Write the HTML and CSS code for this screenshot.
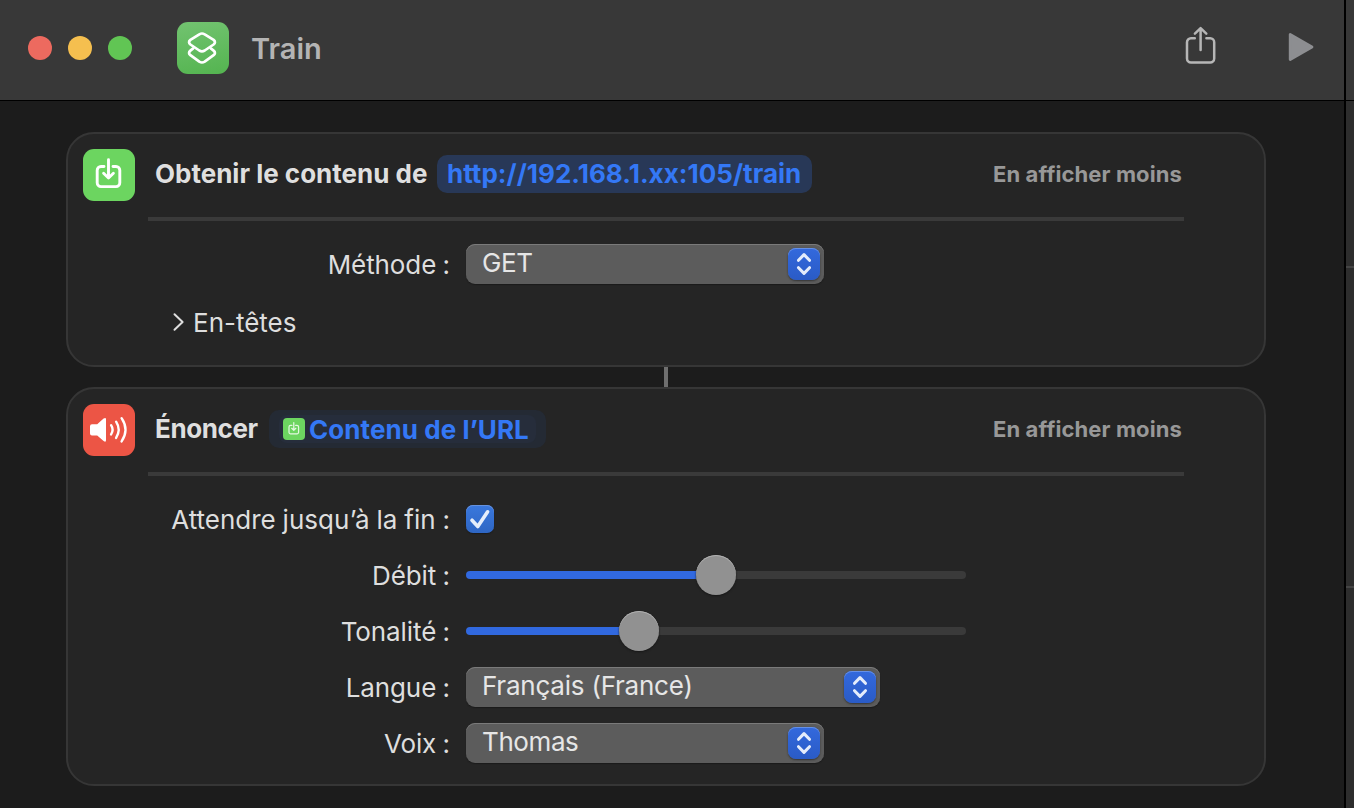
FILE: index.html
```html
<!DOCTYPE html>
<html lang="fr">
<head>
<meta charset="utf-8">
<title>Train</title>
<link rel="stylesheet" href="styles.css">
</head>
<body>
<svg class="defs" width="0" height="0" aria-hidden="true">
  <symbol id="download" viewBox="0 0 52 52">
    <path d="M21 17.500H18a3.800 3.800 0 0 0-3.800 3.800v12.500a3.800 3.800 0 0 0 3.800 3.800h15a3.800 3.800 0 0 0 3.800-3.800V21.300a3.800 3.800 0 0 0-3.800-3.800h-3M25.500 10.800V28.800M20.600 24.300l4.900 4.700 4.900-4.700" fill="none" stroke="currentColor" stroke-width="2.900" stroke-linecap="round" stroke-linejoin="round"/>
  </symbol>
  <symbol id="updown" viewBox="0 0 32 32">
    <path d="M10.500 12.300 16 6.600l5.500 5.700M10.500 19.700 16 25.400l5.500-5.700" fill="none" stroke="#e4ecfb" stroke-width="3" stroke-linecap="round" stroke-linejoin="round"/>
  </symbol>
</svg>
<div class="window">
  <section class="editor">
    <header class="toolbar">
      <div class="lights"><i class="light red"></i><i class="light yellow"></i><i class="light green"></i></div>
      <svg class="app-icon" viewBox="0 0 52 52">
        <g fill="none" stroke="#fff" stroke-width="2.700" stroke-linejoin="round" stroke-linecap="round">
          <path d="M22.300 12.300 13.400 17.900q-2.700 2.300 0 4.600l8.900 6q2.700 1.600 5.400 0l8.900-6q2.700-2.300 0-4.600l-8.900-5.600q-2.700-1.600-5.400 0Z"/>
          <path d="M16.200 26.400 13.400 28.600q-2.700 2.300 0 4.600l8.900 6.500q2.700 1.600 5.400 0l8.900-6.500q2.700-2.300 0-4.600l-2.800-2.200"/>
        </g>
      </svg>
      <h1 class="title">Train</h1>
      <svg class="share" viewBox="0 0 32 40">
        <path d="M10.800 12.300H7a4 4 0 0 0-4 4v16.200a4 4 0 0 0 4 4h19.200a4 4 0 0 0 4-4V16.300a4 4 0 0 0-4-4h-3.800M16.600 2.400V24M10.900 7.600l5.700-5.500 5.700 5.500" fill="none" stroke="#b6b6b6" stroke-width="2.500" stroke-linecap="round" stroke-linejoin="round"/>
      </svg>
      <svg class="play" viewBox="0 0 26 30"><path d="M2.200 2.400v25.200L24 15Z" fill="#8d8e91" stroke="#8d8e91" stroke-width="2.800" stroke-linejoin="round"/></svg>
    </header>
    <main class="canvas">
      <article class="card first">
        <div class="head">
          <svg class="badge get"><use href="#download"/></svg>
          <h2 class="name t-get">Obtenir le contenu de</h2>
          <span class="pill url">http://192.168.1.xx:105/train</span>
          <span class="less">En afficher moins</span>
        </div>
        <hr class="rule">
        <div class="form">
          <div class="row"><label class="label">Méthode :</label>
            <div class="select"><span class="t-g">GET</span><svg class="stepper"><use href="#updown"/></svg></div></div>
          <div class="row disclosure"><svg class="chevron" viewBox="0 0 12 20"><path d="M1.500 2.200 9.600 10 1.500 17.800" fill="none" stroke="#dedede" stroke-width="2" stroke-linecap="round" stroke-linejoin="round"/></svg><span>En-têtes</span></div>
        </div>
      </article>
      <div class="link"></div>
      <article class="card second">
        <div class="head">
          <svg class="badge speak" viewBox="0 0 52 52">
            <path d="M9 20.200h5.200l6.400-5.600q2.400-1.700 2.400.8v20.800q0 2.500-2.400.8l-6.400-5.600H9q-2 0-2-2v-7.200q0-2 2-2Z" fill="#fff"/>
            <path d="M28.100 21.200q3 4.600 0 9.200M33.100 17.700q5.200 8.100 0 16.200M38.600 14.200q7.800 11.600 0 23.200" fill="none" stroke="#fff" stroke-width="2.400" stroke-linecap="round"/>
          </svg>
          <h2 class="name t-speak">Énoncer</h2>
          <span class="pill variable"><span class="inner"><svg class="mini"><use href="#download" transform="scale(1)"/></svg><span class="t-var">Contenu de l’URL</span></span></span>
          <span class="less">En afficher moins</span>
        </div>
        <hr class="rule">
        <div class="form">
          <div class="row"><label class="label t-wait">Attendre jusqu’à la fin :</label>
            <svg class="check" viewBox="0 0 28 28"><path d="m6 15.200 5.800 6.300L21.600 6.800" fill="none" stroke="#e6eefb" stroke-width="3.600" stroke-linecap="round" stroke-linejoin="round"/></svg></div>
          <div class="row"><label class="label">Débit :</label>
            <div class="slider"><i class="fill" style="width:231px"></i><i class="knob"></i><i class="rest"></i></div></div>
          <div class="row"><label class="label">Tonalité :</label>
            <div class="slider"><i class="fill" style="width:154px"></i><i class="knob"></i><i class="rest"></i></div></div>
          <div class="row"><label class="label">Langue :</label>
            <div class="select wide"><span class="t-fr">Français (France)</span><svg class="stepper"><use href="#updown"/></svg></div></div>
          <div class="row"><label class="label">Voix :</label>
            <div class="select"><span class="t-thomas">Thomas</span><svg class="stepper"><use href="#updown"/></svg></div></div>
        </div>
      </article>
    </main>
  </section>
  <aside class="sidebar"><div class="side-top"></div><div class="side-a"></div><div class="side-b"></div><div class="side-c"></div></aside>
</div>
</body>
</html>
```
FILE: styles.css
```css
* { box-sizing: border-box; }
body { margin: 0; overflow: hidden; background: #1c1c1c; color: #dedede; font: 400 26px/40px Inter, "Liberation Sans", sans-serif; white-space: nowrap; }
h1, h2 { margin: 0; font: inherit; font-weight: 700; }
svg { display: block; flex: none; }
.defs { position: absolute; }
.window { display: grid; grid-template-columns: 1346px 8px; height: 808px; }
.editor { border-right: 2px solid #000; min-width: 0; }
.toolbar { display: flex; align-items: center; height: 101px; padding: 0 28px 5px; background: #383838; border-bottom: 1px solid #000; }
.lights { display: flex; gap: 16px; width: 149px; }
.light { width: 24px; height: 24px; border-radius: 50%; }
.red { background: #ed6a5f; }
.yellow { background: #f5bf4f; }
.green { background: #61c554; }
.app-icon { width: 52px; height: 52px; border-radius: 11px; background: linear-gradient(170deg, #72c370, #54b450); }
.title { flex: 1; padding-left: 22px; padding-top: 2px; color: #b4b4b4; font-size: 29px; font-weight: 600; letter-spacing: 0; }
.share { width: 32px; height: 40px; margin: -3px 72px 0 0; }
.play { width: 26px; height: 30px; margin-top: -1px; margin-right: 2px; }

.canvas { padding: 31px 78px 0 66px; }
.card { border: 2px solid #363636; border-radius: 28px; background: #252525; padding: 15px 80px 0 15px; }
.first { height: 235px; }
.second { height: 399px; }
.link { width: 4px; height: 20px; margin: 0 auto; background: #6f6f6f; }
.head { display: flex; align-items: center; height: 52px; }
.badge { width: 52px; height: 52px; border-radius: 11px; color: #fff; }
.get { background: #6cd560; }
.speak { background: #ec5545; }
.name { margin-left: 20px; padding-bottom: 2px; color: #dfdfdf; flex: none; }
.pill { display: flex; align-items: center; height: 38px; border-radius: 10px; color: #3478f6; font-weight: 700; margin-top: -2px; flex: none; }
.url { width: 375px; padding-left: 10px; background: #283857; letter-spacing: 0.03px; }
.variable { width: 277px; padding: 0 10px; background: #242a34; }
.t-get { width: 282px; letter-spacing: 0; }
.t-speak { width: 114px; letter-spacing: -0.4px; }
.t-var { padding-top: 2px; letter-spacing: 0.08px; }
.inner { display: flex; align-items: center; width: 257px; height: 28px; padding-left: 4px; border-radius: 8px; background: #262d3b; }
.mini { width: 22px; height: 22px; margin-right: 4px; border-radius: 4px; background: #6cd560; color: #e4f8e2; }
.less { margin-left: auto; margin-right: 2px; padding-bottom: 2px; color: #989898; font-size: 22px; font-weight: 700; letter-spacing: 0.1px; }
.rule { height: 4px; margin: 16px 0 23px 65px; border: 0; background: #3a3a3a; }
.form { display: flex; flex-direction: column; gap: 16px; }
.row { display: flex; align-items: center; height: 40px; }
.label { width: 367px; margin-right: 16px; padding-top: 2px; text-align: right; letter-spacing: -0.1px; word-spacing: -0.8px; flex: none; }
.t-wait { letter-spacing: 0; word-spacing: -0.4px; }
.select { display: flex; align-items: center; justify-content: space-between; width: 358px; height: 40px; padding: 0 4px 0 16px; border-radius: 9px; background: #5c5c5c; box-shadow: inset 0 1px #7a7a7a, 0 1px 1px #1b1b1b; line-height: 38px; color: #e6e6e6; }
.select > span { padding-bottom: 2px; }
.t-g { letter-spacing: -0.4px; }
.t-fr { letter-spacing: -0.22px; }
.t-thomas { letter-spacing: -0.4px; }
.wide { width: 414px; }
.stepper { width: 32px; height: 32px; border-radius: 8px; background: linear-gradient(#3369dd, #2a5bc6); box-shadow: inset 0 1px #6590e8, 0 1px 2px #333; }
.disclosure { padding: 6px 0 0 90px; }
.chevron { width: 12px; height: 20px; margin-right: 8px; margin-top: -2px; }
.check { width: 28px; height: 28px; border-radius: 7px; background: linear-gradient(#3a78dd, #2e66c4); box-shadow: inset 0 1px #6592df, 0 1px 1px #1b1b1b; }
.slider { display: flex; align-items: center; width: 500px; }
.fill { height: 8px; border-radius: 4px 0 0 4px; background: #3169e0; }
.knob { width: 40px; height: 40px; border-radius: 50%; background: #919191; box-shadow: inset 0 1px #b0b0b0, 0 1px 2px #171717; margin: 0 -1px; z-index: 1; }
.rest { flex: 1; height: 8px; border-radius: 0 4px 4px 0; background: #3a3a3a; }

.sidebar { display: flex; flex-direction: column; background: #2d2d2d; }
.side-top { height: 101px; background: #383838; border-bottom: 1px solid #000; }
.side-a { height: 167px; border-bottom: 2px solid #444; }
.side-b { height: 320px; border-bottom: 2px solid #444; }
.side-c { flex: 1; }
```
